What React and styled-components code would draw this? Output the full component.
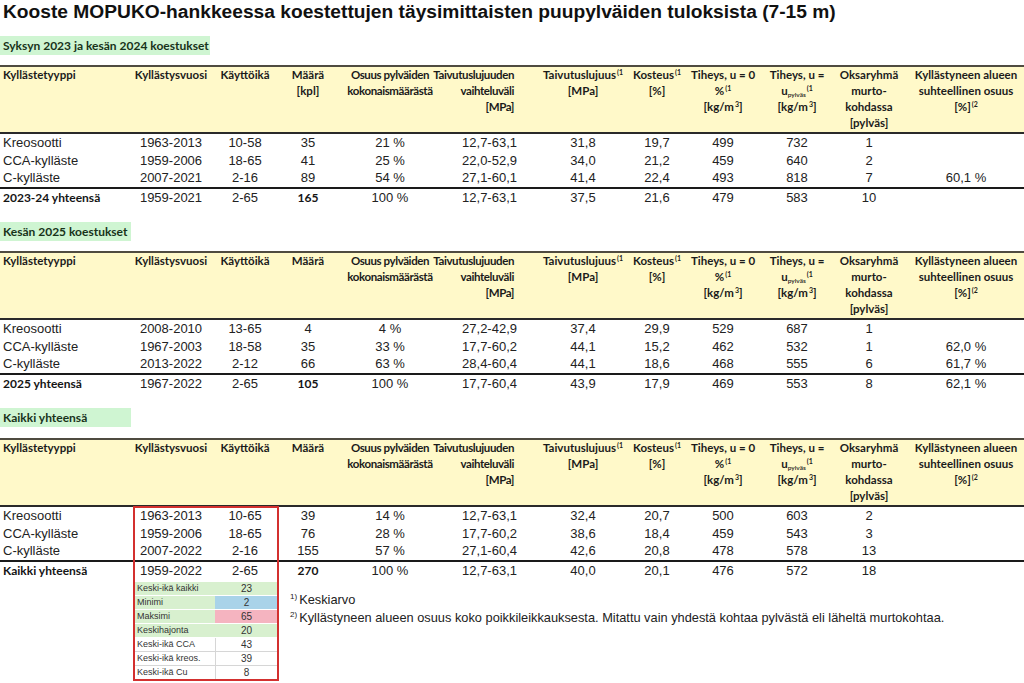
import React from 'react';
import styled, { createGlobalStyle } from 'styled-components';

const GlobalStyle = createGlobalStyle`
  html, body {
    margin: 0;
    padding: 0;
    background: #fff;
  }
`;

const COLS = '128px 86px 62px 64px 100px 82px 122px 26px 106px 42px 102px 104px';

const Page = styled.div`
  width: 1024px;
  height: 683px;
  overflow: hidden;
  background: #fff;
  font-family: 'Liberation Sans', Arial, sans-serif;
  color: #1e1e1e;
  display: flex;
  flex-direction: column;
`;

const Title = styled.h1`
  margin: 0;
  padding-left: 3px;
  height: 24px;
  line-height: 24px;
  font-size: 19.2px;
  font-weight: 700;
  color: #111;
  white-space: nowrap;
`;

const SectionLabel = styled.div`
  width: ${p => p.$width}px;
  height: 19px;
  margin-top: ${p => p.$top}px;
  padding-left: 3px;
  box-sizing: border-box;
  background: #cff5d2;
  font-family: Lato, 'Liberation Sans', sans-serif;
  font-weight: 700;
  font-size: 12px;
  line-height: 19px;
  color: #18331a;
  white-space: nowrap;
`;

const TableWrap = styled.div`
  position: relative;
  margin-top: ${p => p.$top}px;
`;

const HeaderRow = styled.div`
  display: grid;
  grid-template-columns: ${COLS};
  height: 69px;
  box-sizing: border-box;
  background: #fff9c9;
  border-top: 2px solid #4f4b40;
  border-bottom: 2px solid #2a2a2a;
  font-family: Lato, 'Liberation Sans', sans-serif;
  font-weight: 700;
  font-size: 11.5px;
  line-height: 16px;
  color: #1b1b1b;
`;

const Cell = styled.div`
  display: flex;
  min-width: 0;
  white-space: nowrap;
  justify-content: ${p => (p.$align === 'left' ? 'flex-start' : p.$align === 'right' ? 'flex-end' : 'center')};
  text-align: ${p => p.$align || 'center'};
  padding-left: ${p => (p.$align === 'left' ? 3 : 0)}px;
  padding-right: ${p => p.$pr || 0}px;
  letter-spacing: ${p => (p.$tight ? '-0.4px' : 'normal')};
`;

const DataRow = styled.div`
  display: grid;
  grid-template-columns: ${COLS};
  height: 17.5px;
  align-items: center;
  font-size: 13px;
  line-height: 17.5px;
  color: #222;
`;

const TotalRow = styled(DataRow)`
  height: 19.5px;
  line-height: 17.5px;
  border-top: 2px solid #1a1a1a;
  box-sizing: border-box;
`;

const BoldText = styled.span`
  font-family: Lato, 'Liberation Sans', sans-serif;
  font-weight: 700;
  font-size: 12px;
  color: #151515;
`;

const Sup = styled.sup`
  font-size: 7px;
  line-height: 0;
  vertical-align: 0;
  position: relative;
  top: -4px;
  margin-left: 1px;
`;

const Sub = styled.sub`
  font-size: 6.5px;
  line-height: 0;
  vertical-align: 0;
  position: relative;
  top: 2px;
  font-weight: 600;
`;

const Below = styled.div`
  display: flex;
  align-items: flex-start;
  padding-top: 3px;
`;

const Stats = styled.div`
  margin-left: 135px;
  width: 142px;
  display: flex;
  flex-direction: column;
`;

const StatRow = styled.div`
  display: grid;
  grid-template-columns: 80px 62px;
  height: 14px;
  box-sizing: border-box;
  border-bottom: 1px solid ${p => (p.$plain ? '#d6d6d6' : 'rgba(255,255,255,0.5)')};
  font-size: 9px;
  line-height: 13px;
  color: #333;
`;

const tone = {
  green: '#d8f0cf',
  blue: '#a9d3e9',
  pink: '#f5b4c0',
  white: '#fff',
};

const StatLabel = styled.div`
  padding-left: 2px;
  background: ${p => tone[p.$tone]};
  white-space: nowrap;
`;

const StatValue = styled.div`
  text-align: center;
  font-size: 10px;
  background: ${p => tone[p.$tone]};
  border-left: 1px solid ${p => (p.$tone === 'white' ? '#d6d6d6' : 'transparent')};
`;

const RedFrame = styled.div`
  position: absolute;
  left: 133px;
  top: 68px;
  width: 146px;
  bottom: -1px;
  box-sizing: border-box;
  border: 2px solid #d3302f;
  pointer-events: none;
`;

const Notes = styled.div`
  margin-left: 13px;
  padding-top: 9px;
  font-size: 12.8px;
  line-height: 18px;
  color: #222;
`;

const NoteMark = styled.sup`
  font-size: 8px;
  line-height: 0;
  vertical-align: 0;
  position: relative;
  top: -5px;
  margin-right: 2px;
`;

function Header({ kpl }) {
  return (
    <HeaderRow>
      <Cell $align="left">Kyllästetyyppi</Cell>
      <Cell>Kyllästysvuosi</Cell>
      <Cell>Käyttöikä</Cell>
      <Cell>
        <div>
          Määrä
          {kpl && (
            <>
              <br />
              [kpl]
            </>
          )}
        </div>
      </Cell>
      <Cell $tight>
        <div>
          Osuus pylväiden
          <br />
          kokonaismäärästä
        </div>
      </Cell>
      <Cell $align="right" $pr={8} $tight>
        <div>
          Taivutuslujuuden
          <br />
          vaihteluväli
          <br />
          [MPa]
        </div>
      </Cell>
      <Cell>
        <div>
          Taivutuslujuus<Sup>(1</Sup>
          <br />
          [MPa]
        </div>
      </Cell>
      <Cell>
        <div>
          Kosteus<Sup>(1</Sup>
          <br />
          [%]
        </div>
      </Cell>
      <Cell>
        <div>
          Tiheys, u = 0
          <br />
          %<Sup>(1</Sup>
          <br />
          [kg/m<Sup>3</Sup>]
        </div>
      </Cell>
      <Cell>
        <div>
          Tiheys, u =
          <br />
          u<Sub>pylväs</Sub>
          <Sup>(1</Sup>
          <br />
          [kg/m<Sup>3</Sup>]
        </div>
      </Cell>
      <Cell>
        <div>
          Oksaryhmä
          <br />
          murto-
          <br />
          kohdassa
          <br />
          [pylväs]
        </div>
      </Cell>
      <Cell $pr={12}>
        <div>
          Kyllästyneen alueen
          <br />
          suhteellinen osuus
          <br />
          [%]<Sup>(2</Sup>
        </div>
      </Cell>
    </HeaderRow>
  );
}

// values start at column 2; index 4 is the right-aligned range column
function Values({ values }) {
  return values.map((v, i) => (
    <Cell key={i} $align={i === 4 ? 'right' : undefined} $pr={i === 4 ? 5 : i === 10 ? 12 : 0}>
      {v}
    </Cell>
  ));
}

function ResultTable({ kpl, rows, total, top, children }) {
  return (
    <TableWrap $top={top}>
      <Header kpl={kpl} />
      {rows.map(r => (
        <DataRow key={r[0]}>
          <Cell $align="left">{r[0]}</Cell>
          <Values values={r.slice(1)} />
        </DataRow>
      ))}
      <TotalRow>
        <Cell $align="left">
          <BoldText>{total[0]}</BoldText>
        </Cell>
        <Values values={total.slice(1).map((v, i) => (i === 2 ? <BoldText key={i}>{v}</BoldText> : v))} />
      </TotalRow>
      {children}
    </TableWrap>
  );
}

const table1 = [
  ['Kreosootti', '1963-2013', '10-58', '35', '21 %', '12,7-63,1', '31,8', '19,7', '499', '732', '1', ''],
  ['CCA-kylläste', '1959-2006', '18-65', '41', '25 %', '22,0-52,9', '34,0', '21,2', '459', '640', '2', ''],
  ['C-kylläste', '2007-2021', '2-16', '89', '54 %', '27,1-60,1', '41,4', '22,4', '493', '818', '7', '60,1 %'],
];
const total1 = ['2023-24 yhteensä', '1959-2021', '2-65', '165', '100 %', '12,7-63,1', '37,5', '21,6', '479', '583', '10', ''];

const table2 = [
  ['Kreosootti', '2008-2010', '13-65', '4', '4 %', '27,2-42,9', '37,4', '29,9', '529', '687', '1', ''],
  ['CCA-kylläste', '1967-2003', '18-58', '35', '33 %', '17,7-60,2', '44,1', '15,2', '462', '532', '1', '62,0 %'],
  ['C-kylläste', '2013-2022', '2-12', '66', '63 %', '28,4-60,4', '44,1', '18,6', '468', '555', '6', '61,7 %'],
];
const total2 = ['2025 yhteensä', '1967-2022', '2-65', '105', '100 %', '17,7-60,4', '43,9', '17,9', '469', '553', '8', '62,1 %'];

const table3 = [
  ['Kreosootti', '1963-2013', '10-65', '39', '14 %', '12,7-63,1', '32,4', '20,7', '500', '603', '2', ''],
  ['CCA-kylläste', '1959-2006', '18-65', '76', '28 %', '17,7-60,2', '38,6', '18,4', '459', '543', '3', ''],
  ['C-kylläste', '2007-2022', '2-16', '155', '57 %', '27,1-60,4', '42,6', '20,8', '478', '578', '13', ''],
];
const total3 = ['Kaikki yhteensä', '1959-2022', '2-65', '270', '100 %', '12,7-63,1', '40,0', '20,1', '476', '572', '18', ''];

const stats = [
  ['Keski-ikä kaikki', '23', 'green', 'green'],
  ['Minimi', '2', 'green', 'blue'],
  ['Maksimi', '65', 'green', 'pink'],
  ['Keskihajonta', '20', 'green', 'green'],
  ['Keski-ikä CCA', '43', 'white', 'white'],
  ['Keski-ikä kreos.', '39', 'white', 'white'],
  ['Keski-ikä Cu', '8', 'white', 'white'],
];

export default function App() {
  return (
    <Page>
      <GlobalStyle />
      <Title>Kooste MOPUKO-hankkeessa koestettujen täysimittaisten puupylväiden tuloksista (7-15 m)</Title>

      <SectionLabel $width={210} $top={12}>Syksyn 2023 ja kesän 2024 koestukset</SectionLabel>
      <ResultTable kpl rows={table1} total={total1} top={10} />

      <SectionLabel $width={131} $top={16}>Kesän 2025 koestukset</SectionLabel>
      <ResultTable rows={table2} total={total2} top={10} />

      <SectionLabel $width={131} $top={16}>Kaikki yhteensä</SectionLabel>
      <ResultTable rows={table3} total={total3} top={11}>
        <Below>
          <Stats>
            {stats.map(([label, value, lt, vt]) => (
              <StatRow key={label} $plain={lt === 'white'}>
                <StatLabel $tone={lt}>{label}</StatLabel>
                <StatValue $tone={vt}>{value}</StatValue>
              </StatRow>
            ))}
          </Stats>
          <Notes>
            <div>
              <NoteMark>1)</NoteMark>Keskiarvo
            </div>
            <div>
              <NoteMark>2)</NoteMark>Kyllästyneen alueen osuus koko poikkileikkauksesta. Mitattu vain yhdestä kohtaa
              pylvästä eli läheltä murtokohtaa.
            </div>
          </Notes>
        </Below>
        <RedFrame />
      </ResultTable>
    </Page>
  );
}
